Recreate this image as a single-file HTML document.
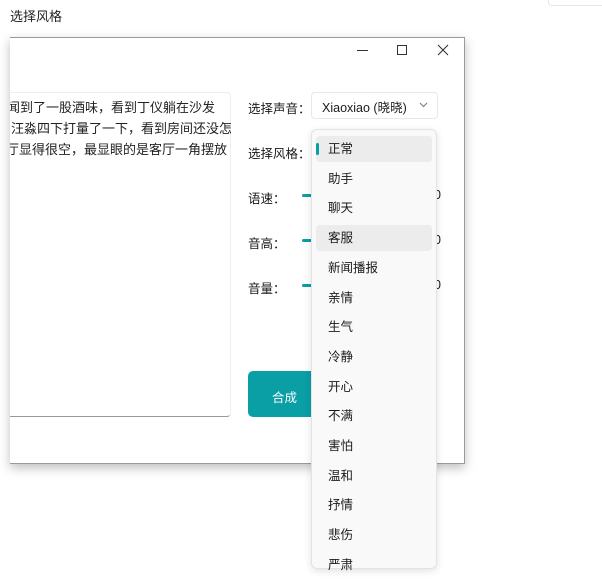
<!DOCTYPE html>
<html><head><meta charset="utf-8"><style>
*{margin:0;padding:0;box-sizing:border-box}
body{width:602px;height:560px;overflow:hidden;background:#fff;position:relative;font-family:"Liberation Sans","Noto Sans CJK SC",sans-serif;color:#1a1a1a}
.a{position:absolute}
.t{font-size:12.5px}
</style></head><body>
<div class="a" style="left:10px;top:6px;font-size:13px;color:#222">选择风格</div>
<div class="a" style="left:548px;top:-4px;width:60px;height:10px;border:1px solid #e6e6e6;border-radius:4px"></div>
<!-- window -->
<div class="a" style="left:10px;top:37px;width:455px;height:427px;background:#fff;border:1px solid #9a9a9a;border-left:none;box-shadow:0 4px 10px rgba(0,0,0,.25)"></div>
<div class="a" style="left:357px;top:50px;width:11px;height:1px;background:#333"></div>
<div class="a" style="left:397px;top:45px;width:10px;height:10px;border:1px solid #333"></div>
<svg class="a" style="left:437px;top:44px" width="12" height="12"><path d="M1 1L11 11M11 1L1 11" stroke="#333" stroke-width="1.1"/></svg>
<!-- textbox -->
<div class="a" style="left:10px;top:92px;width:221px;height:325px;border:1px solid #eee;border-left:none;border-bottom:1px solid #999;border-radius:0 4px 4px 0;background:#fff"></div>
<div class="a" style="left:10px;top:97px;width:221px;font-size:13px;line-height:21px;white-space:nowrap;overflow:hidden;color:#222">
<div style="margin-left:-3px">闻到了一股酒味，看到丁仪躺在沙发</div>
<div style="margin-left:1px">汪淼四下打量了一下，看到房间还没怎</div>
<div style="margin-left:-4px">厅显得很空，最显眼的是客厅一角摆放</div>
</div>
<!-- right labels -->
<div class="a t" style="left:248px;top:98px">选择声音：</div>
<div class="a" style="left:311px;top:92px;width:127px;height:27px;border:1px solid #e8e8e8;border-radius:4px;background:#fff"></div>
<div class="a t" style="left:322px;top:97px;font-size:12.5px">Xiaoxiao (晓晓)</div>
<svg class="a" style="left:419px;top:102px" width="9" height="6"><path d="M1 1L4.5 4.5L8 1" stroke="#777" fill="none"/></svg>
<div class="a t" style="left:248px;top:143px">选择风格：</div>
<div class="a t" style="left:248px;top:188px">语速：</div>
<div class="a t" style="left:248px;top:233px">音高：</div>
<div class="a t" style="left:248px;top:278px">音量：</div>
<div class="a" style="left:302px;top:194px;width:12px;height:3px;background:#0a9ea5;border-radius:2px"></div>
<div class="a" style="left:302px;top:239px;width:12px;height:3px;background:#0a9ea5;border-radius:2px"></div>
<div class="a" style="left:302px;top:284px;width:12px;height:3px;background:#0a9ea5;border-radius:2px"></div>
<div class="a t" style="left:434px;top:188px">0</div>
<div class="a t" style="left:434px;top:233px">0</div>
<div class="a t" style="left:434px;top:278px">0</div>
<div class="a" style="left:248px;top:371px;width:70px;height:46px;background:#0a9ea5;border-radius:5px"></div>
<div class="a t" style="left:272px;top:387px;color:#fff">合成</div>
<!-- dropdown -->
<div class="a" style="left:311px;top:129px;width:126px;height:440px;background:#f9f9f9;border:1px solid #e3e3e3;border-radius:6px;box-shadow:0 2px 8px rgba(0,0,0,.12)"></div>
<div class="a" style="left:316px;top:136px;width:116px;height:26px;background:#ececec;border-radius:4px"></div>
<div class="a" style="left:316px;top:143px;width:3px;height:12px;background:#0a9ea5;border-radius:2px"></div>
<div class="a" style="left:316px;top:225px;width:116px;height:26px;background:#ececec;border-radius:4px"></div>
<div class="a t" style="left:328px;top:142px;line-height:29.7px;margin-top:-7px">
<div>正常</div><div>助手</div><div>聊天</div><div>客服</div><div>新闻播报</div><div>亲情</div><div>生气</div><div>冷静</div><div>开心</div><div>不满</div><div>害怕</div><div>温和</div><div>抒情</div><div>悲伤</div><div>严肃</div>
</div>
</body></html>
